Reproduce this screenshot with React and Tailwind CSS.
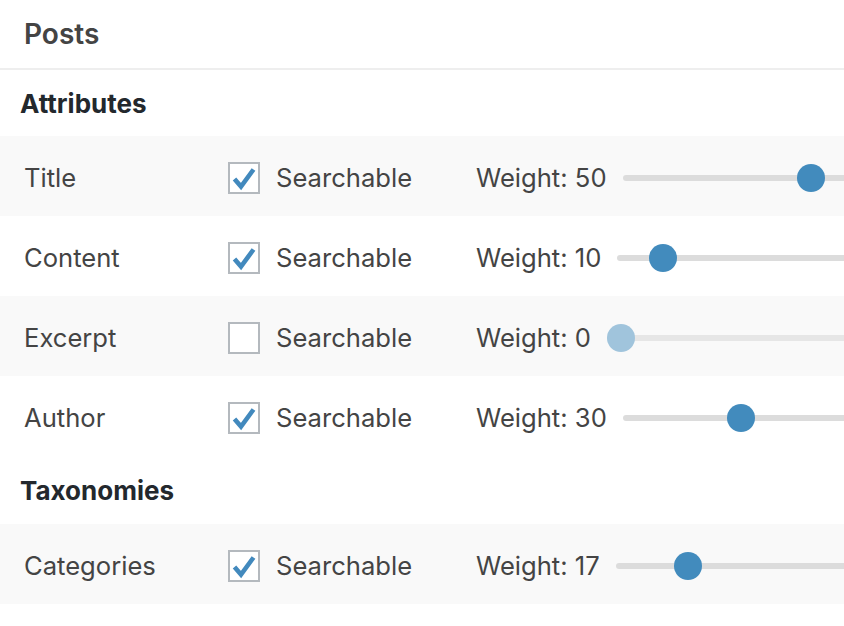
import React from "react";

const attributes = [
  { label: "Title", checked: true, weight: 50, offset: 174 },
  { label: "Content", checked: true, weight: 10, offset: 32 },
  { label: "Excerpt", checked: false, weight: 0, offset: 0 },
  { label: "Author", checked: true, weight: 30, offset: 104 },
];

const taxonomies = [{ label: "Categories", checked: true, weight: 17, offset: 58 }];

function Checkbox({ checked }) {
  return (
    <div className="w-8 h-8 shrink-0 border-2 border-[#b4b9be] bg-white flex items-center justify-center">
      {checked && (
        <svg width="28" height="28" viewBox="0 0 28 28">
          <polyline
            points="4.5,15 11,22.5 23.5,5.5"
            fill="none"
            stroke="#4289bd"
            strokeWidth="4.6"
            strokeLinejoin="miter"
            strokeLinecap="butt"
          />
        </svg>
      )}
    </div>
  );
}

function Row({ item, shaded }) {
  return (
    <div className={`h-20 flex items-center pl-6 pt-1 overflow-hidden ${shaded ? "bg-[#f9f9f9]" : "bg-white"}`}>
      <div className="w-[204px] shrink-0">{item.label}</div>
      <div className="w-[248px] shrink-0 flex items-center gap-4">
        <Checkbox checked={item.checked} />
        <span>Searchable</span>
      </div>
      <div className="flex items-center gap-4 shrink-0">
        <span className="whitespace-nowrap">Weight: {item.weight}</span>
        <div
          className={`relative w-[500px] h-[6px] rounded-full shrink-0 ${
            item.checked ? "bg-[#dcdcdc]" : "bg-[#e6e6e6]"
          }`}
        >
          <div
            className={`absolute top-1/2 -translate-y-1/2 w-7 h-7 rounded-full ${
              item.checked ? "bg-[#428bbd]" : "bg-[#a0c4dc]"
            }`}
            style={{ left: item.offset }}
          />
        </div>
      </div>
    </div>
  );
}

export default function App() {
  return (
    <div
      className="w-[844px] h-[626px] bg-white overflow-hidden text-[#444] text-[25.6px]"
      style={{ fontFamily: "Inter, 'Liberation Sans', sans-serif" }}
    >
      <div className="h-[70px] flex items-center pl-6 border-b-2 border-[#eeeeee] font-semibold text-[28px] text-[#444]">
        Posts
      </div>
      <div className="h-[66px] flex items-center pl-5 font-bold text-[26px] text-[#23282d]">Attributes</div>
      {attributes.map((a, i) => (
        <Row key={a.label} item={a} shaded={i % 2 === 0} />
      ))}
      <div className="h-[68px] flex items-center pl-5 font-bold text-[26px] text-[#23282d]">Taxonomies</div>
      {taxonomies.map((a) => (
        <Row key={a.label} item={a} shaded />
      ))}
    </div>
  );
}
